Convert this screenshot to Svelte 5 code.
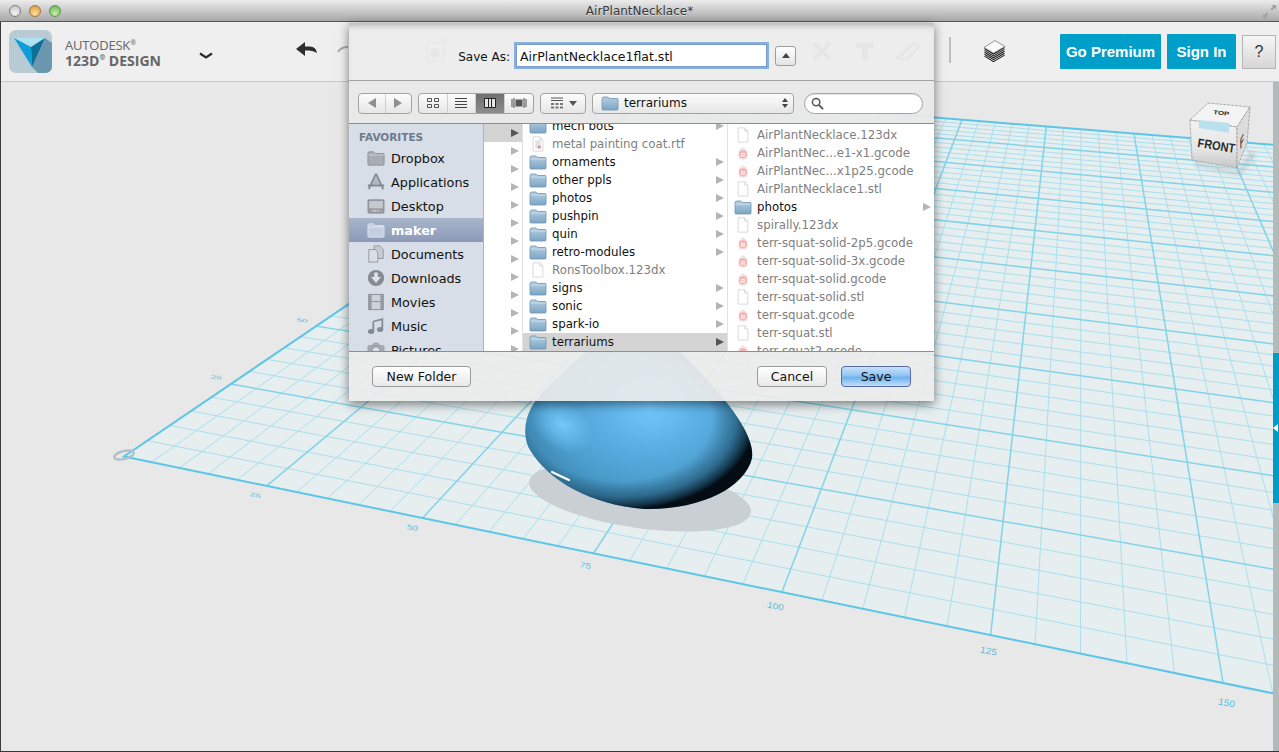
<script>
	// perspective map for the ground grid, from four measured corners
	const quad = [[124, 456.5], [1223, 683], [1134, 133.5], [657, 95]];
	const [x0, y0] = quad[0], [x1, y1] = quad[1], [x2, y2] = quad[2], [x3, y3] = quad[3];
	const sx = x0 - x1 + x2 - x3, sy = y0 - y1 + y2 - y3;
	const dx1 = x1 - x2, dx2 = x3 - x2, dy1 = y1 - y2, dy2 = y3 - y2;
	const den = dx1 * dy2 - dx2 * dy1;
	const g = (sx * dy2 - dx2 * sy) / den, h = (dx1 * sy - sx * dy1) / den;
	const a = x1 - x0 + g * x1, b = x3 - x0 + h * x3, d = y1 - y0 + g * y1, e = y3 - y0 + h * y3;

	function project(u, v) {
		const s = u / 150, t = v / 250, w = g * s + h * t + 1;
		return [(a * s + b * t + x0) / w, (d * s + e * t + y0) / w];
	}

	const uMax = 200, vMax = 250;
	const pts = (arr) => arr.map((p) => p.map((n) => n.toFixed(1)).join(',')).join(' ');
	const plane = pts([project(0, 0), project(uMax, 0), project(uMax, vMax), project(0, vMax)]);

	const minor = [], major = [];
	for (let u = 5; u <= uMax; u += 5) {
		(u % 25 ? minor : major).push([project(u, 0), project(u, vMax)]);
	}
	for (let v = 5; v < vMax; v += 5) {
		(v % 25 ? minor : major).push([project(0, v), project(uMax, v)]);
	}

	const labels = [
		{ t: '25', x: 255, y: 497, r: 11, sy: 0.55 },
		{ t: '50', x: 412, y: 530, r: 11, sy: 0.7 },
		{ t: '75', x: 585, y: 568, r: 11, sy: 0.75 },
		{ t: '100', x: 775, y: 609, r: 11, sy: 0.85 },
		{ t: '125', x: 988, y: 654, r: 11, sy: 0.9 },
		{ t: '150', x: 1226, y: 706, r: 11, sy: 0.95 },
		{ t: '25', x: 216, y: 379, r: 5, sy: 0.5 },
		{ t: '50', x: 302, y: 322, r: 5, sy: 0.45 }
	];

	const stripes = [0, 1.9, 3.8, 5.7, 7.6];

	const favorites = [
		{ name: 'Dropbox', icon: 'folder' },
		{ name: 'Applications', icon: 'apps' },
		{ name: 'Desktop', icon: 'desktop' },
		{ name: 'maker', icon: 'home', active: true },
		{ name: 'Documents', icon: 'docs' },
		{ name: 'Downloads', icon: 'down' },
		{ name: 'Movies', icon: 'film' },
		{ name: 'Music', icon: 'music' },
		{ name: 'Pictures', icon: 'camera' }
	];

	const middle = [
		{ name: 'mech bots', kind: 'dir' },
		{ name: 'metal painting coat.rtf', kind: 'rtf' },
		{ name: 'ornaments', kind: 'dir' },
		{ name: 'other ppls', kind: 'dir' },
		{ name: 'photos', kind: 'dir' },
		{ name: 'pushpin', kind: 'dir' },
		{ name: 'quin', kind: 'dir' },
		{ name: 'retro-modules', kind: 'dir' },
		{ name: 'RonsToolbox.123dx', kind: 'doc' },
		{ name: 'signs', kind: 'dir' },
		{ name: 'sonic', kind: 'dir' },
		{ name: 'spark-io', kind: 'dir' },
		{ name: 'terrariums', kind: 'dir', selected: true }
	];

	const right = [
		{ name: 'AirPlantNecklace.123dx', kind: 'doc' },
		{ name: 'AirPlantNec...e1-x1.gcode', kind: 'gcode' },
		{ name: 'AirPlantNec...x1p25.gcode', kind: 'gcode' },
		{ name: 'AirPlantNecklace1.stl', kind: 'doc' },
		{ name: 'photos', kind: 'dir' },
		{ name: 'spirally.123dx', kind: 'doc' },
		{ name: 'terr-squat-solid-2p5.gcode', kind: 'gcode' },
		{ name: 'terr-squat-solid-3x.gcode', kind: 'gcode' },
		{ name: 'terr-squat-solid.gcode', kind: 'gcode' },
		{ name: 'terr-squat-solid.stl', kind: 'doc' },
		{ name: 'terr-squat.gcode', kind: 'gcode' },
		{ name: 'terr-squat.stl', kind: 'doc' },
		{ name: 'terr-squat2.gcode', kind: 'gcode' }
	];

	const blobPath = 'M636 312 C600 340 560 372 538 398 C524 414 522 436 530 450 C548 480 590 505 645 509 C700 510 745 488 752 458 C755 440 735 412 722 397 C700 370 668 340 636 312 Z';
</script>

{#snippet fileIcon(kind)}
	{#if kind === 'dir'}
		<svg class="file-icon" viewBox="0 0 18 15">
			<path d="M1 3.5 Q1 1.5 3 1.5 H7 L8.5 3 H16 Q17 3 17 4 V13.5 Q17 14.5 16 14.5 H2 Q1 14.5 1 13.5 Z" fill="url(#folderFill)" stroke="#6f93ad" stroke-width="0.8" />
			<path d="M1.5 4.6 H16.5" stroke="#d5e5ef" stroke-width="0.8" />
		</svg>
	{:else if kind === 'gcode'}
		<svg class="file-icon" viewBox="0 0 18 18">
			<path d="M4 6.5 L9 2 L14 6.5 V15.5 Q9 17.5 4 15.5 Z" fill="#ece6e6" />
			<circle cx="9" cy="10.5" r="4.6" fill="#f8b2b2" />
			<text x="9" y="13.3" class="r-mark">R</text>
		</svg>
	{:else}
		<svg class="file-icon" viewBox="0 0 18 18">
			<path d="M3.5 1 H11 L14.5 4.5 V17 H3.5 Z" fill="#fff" stroke="#d4d4d4" />
			<path d="M11 1 V4.5 H14.5" fill="#f1f1f1" stroke="#d4d4d4" />
			{#if kind === 'rtf'}
				<rect x="6" y="5" width="6" height="9" fill="#e2e2e2" />
				<rect x="9" y="11" width="3" height="3" fill="#cf8f8f" />
			{/if}
		</svg>
	{/if}
{/snippet}

{#snippet favIcon(icon)}
	<svg class="fav-icon" viewBox="0 0 20 20">
		{#if icon === 'folder' || icon === 'home'}
			<path d="M1 5 Q1 3 3 3 H7 L9 5 H18 Q19 5 19 6 V17 Q19 18 18 18 H2 Q1 18 1 17 Z" fill={icon === 'home' ? '#c3cee0' : '#a9acb3'} stroke={icon === 'home' ? '#e6ebf3' : '#7f838b'} stroke-width="0.8" />
			<path d="M1.5 6.6 H18.5" stroke={icon === 'home' ? '#e6ebf3' : '#cfd1d6'} />
		{:else if icon === 'apps'}
			<path d="M10 1 L18 18 M10 1 L2 18 M4 13 H16 M1 14 L19 14" stroke="#858a93" stroke-width="2.2" fill="none" />
			<path d="M10 5 L6 13 H14 Z" fill="#b1b5bc" />
		{:else if icon === 'desktop'}
			<rect x="1" y="3" width="18" height="15" rx="1" fill="#9a9da5" stroke="#74777e" stroke-width="0.6" />
			<rect x="2.5" y="4.5" width="15" height="8" fill="#c6c9ce" />
			<path d="M6 15.5 H14" stroke="#e2e3e6" stroke-width="1.4" stroke-dasharray="1.5 1" />
		{:else if icon === 'docs'}
			<path d="M8 1 H14 L18 5 V15 H8 Z" fill="#c9ccd2" stroke="#7f838b" stroke-width="0.8" />
			<path d="M2 5 H9 L12 8 V19 H2 Z" fill="#dcdee2" stroke="#7f838b" stroke-width="0.8" />
		{:else if icon === 'down'}
			<circle cx="10" cy="10" r="9" fill="#858a93" />
			<path d="M8 4 H12 V9 H15.5 L10 15.5 L4.5 9 H8 Z" fill="#dfe2e7" />
		{:else if icon === 'film'}
			<rect x="2" y="1.5" width="16" height="17" fill="#cfd2d7" stroke="#858a93" />
			<rect x="2" y="1.5" width="3" height="17" fill="#858a93" />
			<rect x="15" y="1.5" width="3" height="17" fill="#858a93" />
			<path d="M5 9.5 H15" stroke="#858a93" />
			<path d="M3.5 2 V18 M16.5 2 V18" stroke="#d5d8dd" stroke-dasharray="1 1" />
		{:else if icon === 'music'}
			<path d="M7 5 L17 2.5 V14 M7 5 V16" stroke="#858a93" stroke-width="2" fill="none" />
			<ellipse cx="4.5" cy="16" rx="3.5" ry="2.8" fill="#858a93" />
			<ellipse cx="14.5" cy="14" rx="3.5" ry="2.8" fill="#858a93" />
		{:else if icon === 'camera'}
			<rect x="1" y="5" width="18" height="13" rx="2" fill="#a9acb3" stroke="#7f838b" stroke-width="0.6" />
			<circle cx="10" cy="11" r="4.5" fill="#dcdee2" stroke="#7f838b" />
			<path d="M6 5 L7.5 2.5 H12.5 L14 5" fill="#a9acb3" stroke="#7f838b" stroke-width="0.6" />
		{/if}
	</svg>
{/snippet}

<div class="window">
	<header class="titlebar">
		<div class="lights">
			<span class="light gray"></span>
			<span class="light orange"></span>
			<span class="light green"></span>
		</div>
		<span class="title">AirPlantNecklace*</span>
		<svg class="zoom-icon" viewBox="0 0 15 15">
			<path d="M14 1 H9.5 L11 2.5 L8.5 5 L10 6.5 L12.5 4 L14 5.5 Z" fill="#a2a2a2" />
			<path d="M1 14 H5.5 L4 12.5 L6.5 10 L5 8.5 L2.5 11 L1 9.5 Z" fill="#a2a2a2" />
		</svg>
	</header>

	<div class="toolbar">
		<svg class="logo" viewBox="0 0 43 43">
			<rect width="43" height="43" rx="7" fill="#b8cbd5" />
			<path d="M36 8 L43 13 V36 Q43 43 36 43 H29 L23 37 Z" fill="#6b98ae" />
			<path d="M5 8 H36 L22 17 Z" fill="#aee2f2" />
			<path d="M5 8 L22 17 L23 37 Z" fill="#0f9fd8" />
			<path d="M36 8 L22 17 L23 37 Z" fill="#0e6f96" />
		</svg>
		<div class="brand">
			<span class="brand-top">AUTODESK<sup>®</sup></span>
			<span class="brand-bottom">123D<sup>®</sup> DESIGN</span>
		</div>
		<svg class="chevron" viewBox="0 0 14 8">
			<path d="M1 1.5 L7 5.5 L13 1.5" fill="none" stroke="#2b2b2b" stroke-width="2.2" />
		</svg>
		<svg class="tools" viewBox="0 0 710 40">
			<path d="M0 15 L9 8 V12.5 H14 Q20 12.5 21 19 Q17 16.5 13 16.5 H9 V22 Z" fill="#2e2e2e" />
			<path d="M42 18 Q45 13 52 13" fill="none" stroke="#a9a9a9" stroke-width="2" />
			<g class="behind">
				<rect x="131" y="9" width="17" height="18" rx="3" fill="none" stroke="#9a9a9a" stroke-width="1.5" />
				<circle cx="139" cy="19" r="5" fill="#8a8a8a" />
				<path d="M148 3 V11 M144 7 H152" stroke="#9a9a9a" stroke-width="1.5" />
				<path d="M518 9 L534 25 M534 9 L518 25" stroke="#777" stroke-width="4" />
				<path d="M560 9 H578 V14 H572 V26 H566 V14 H560 Z" fill="#777" />
				<path d="M602 24 L616 10 Q622 8 622 14 L610 26 Z" fill="none" stroke="#8a8a8a" stroke-width="3" />
			</g>
			<path d="M654 3 V29" stroke="#8d8d8d" />
			{#each stripes as s}
				<path d="M688.5 {14.5 + s} L697.5 {20 + s} L708.5 {13.5 + s}" fill="none" stroke="#1e1e1e" stroke-width="1.1" />
			{/each}
			<path d="M688 13.5 L699 6.5 L709 12.5 L697.5 19 Z" fill="#fafafa" stroke="#555" stroke-width="0.6" />
		</svg>
		<div class="actions">
			<button class="cta premium">Go Premium</button>
			<button class="cta signin">Sign In</button>
			<button class="help">?</button>
		</div>
	</div>

	<main class="viewport">
		<svg class="scene" viewBox="0 82 1273 669">
			<defs>
				<radialGradient id="blobFill" gradientUnits="userSpaceOnUse" cx="650" cy="405" r="135" gradientTransform="translate(0 90) scale(1 .78)">
					<stop offset="0" stop-color="#72c8fc" />
					<stop offset="0.35" stop-color="#5db1e6" />
					<stop offset="0.75" stop-color="#4a9ccb" />
					<stop offset="1" stop-color="#3c83ad" />
				</radialGradient>
				<radialGradient id="blobDark" gradientUnits="userSpaceOnUse" cx="0" cy="0" r="1" gradientTransform="translate(620 420) scale(135 90)">
					<stop offset="0.68" stop-color="#1c4a66" stop-opacity="0" />
					<stop offset="0.85" stop-color="#1c4a66" stop-opacity="0.55" />
					<stop offset="0.96" stop-color="#0c2535" stop-opacity="0.92" />
					<stop offset="1" stop-color="#040d14" stop-opacity="1" />
				</radialGradient>
				<radialGradient id="blobGlow">
					<stop offset="0" stop-color="#78ccff" stop-opacity="0.9" />
					<stop offset="1" stop-color="#78ccff" stop-opacity="0" />
				</radialGradient>
				<linearGradient id="cubeFront" x1="0" y1="0" x2="0" y2="1">
					<stop offset="0" stop-color="#f2f2f2" />
					<stop offset="0.6" stop-color="#e6e6e6" />
					<stop offset="1" stop-color="#c6c6c6" />
				</linearGradient>
				<linearGradient id="folderFill" x1="0" y1="0" x2="0" y2="1">
					<stop offset="0" stop-color="#b5d0e2" />
					<stop offset="1" stop-color="#7ba5c4" />
				</linearGradient>
				<clipPath id="sceneClip">
					<rect x="0" y="82" width="1273" height="669" />
				</clipPath>
			</defs>

			<g clip-path="url(#sceneClip)">
				<polygon points={plane} fill="#e6eef0" />
				{#each minor as [p, q]}
					<line x1={p[0]} y1={p[1]} x2={q[0]} y2={q[1]} class="minor" />
				{/each}
				{#each major as [p, q]}
					<line x1={p[0]} y1={p[1]} x2={q[0]} y2={q[1]} class="major" />
				{/each}
				<polyline points={pts([project(uMax, vMax), project(0, vMax), project(0, 0), project(uMax, 0)])} class="edge" />
			</g>

			{#each labels as l}
				<text class="tick" transform="translate({l.x} {l.y}) rotate({l.r}) scale(1 {l.sy})">{l.t}</text>
			{/each}

			<ellipse cx="124" cy="455" rx="10" ry="4" transform="rotate(-14 124 455)" fill="none" stroke="#b3c0c8" stroke-width="2.5" />

			<!-- droplet and its shadow -->
			<ellipse cx="640" cy="497" rx="112" ry="31" transform="rotate(8 640 497)" fill="#c9cfd2" />
			<path d={blobPath} fill="url(#blobFill)" />
			<ellipse cx="562" cy="425" rx="34" ry="24" transform="rotate(35 562 425)" fill="url(#blobGlow)" />
			<path d={blobPath} fill="url(#blobDark)" />
			<path class="specular" d="M552 472 Q560 476 569 480" />

			<!-- view cube -->
			<polygon class="cube-shadow" points="1194,160 1237,171 1252,150 1256,155 1240,176 1196,166" />
			<g class="cube">
				<polygon points="1190,120 1208,103 1250,107 1237,127" fill="#f3f3f3" />
				<polygon points="1190,120 1237,127 1237,168 1192,160" fill="url(#cubeFront)" />
				<polygon points="1237,127 1250,107 1247,143 1237,168" fill="#dcdcdc" />
				<polygon class="strip" points="1199,120 1229,123 1229,133 1199,128" />
				<text class="cube-front" transform="translate(1197 147) rotate(9) scale(1 1.15)">FRONT</text>
				<text class="cube-top" transform="translate(1213 114) rotate(7) scale(1 .7)">TOP</text>
				<text class="cube-side" transform="translate(1240 150) skewY(-62) scale(.5 1.25)">F</text>
			</g>
		</svg>
		<aside class="side-rail">
			<div class="rail-tab"><span class="rail-arrow"></span></div>
		</aside>
	</main>

	<section class="dialog">
		<div class="saveas">
			<label class="saveas-label" for="fname">Save As:</label>
			<input id="fname" class="saveas-input" value="AirPlantNecklace1flat.stl" />
			<button class="disclose"><span class="up"></span></button>
		</div>

		<div class="browser-bar">
			<div class="seg nav">
				<span><i class="tri left"></i></span>
				<span><i class="tri right"></i></span>
			</div>
			<div class="seg views">
				<span>
					<svg viewBox="0 0 14 12" class="vi"><path d="M1.5 1.5h4v3h-4zM8.5 1.5h4v3h-4zM1.5 7.5h4v3h-4zM8.5 7.5h4v3h-4z" fill="none" stroke="#555" /></svg>
				</span>
				<span>
					<svg viewBox="0 0 14 12" class="vi"><path d="M1 1.5H13M1 4.5H13M1 7.5H13M1 10.5H13" stroke="#444" /></svg>
				</span>
				<span class="on">
					<svg viewBox="0 0 14 12" class="vi"><path d="M1.5 1.5h11v9h-11zM5.5 1.5v9M8.5 1.5v9" fill="#e6e6e6" stroke="#222" /></svg>
				</span>
				<span>
					<svg viewBox="0 0 16 12" class="vi wide"><path d="M1 2v8M3 1v10M13 1v10M15 2v8" stroke="#444" fill="none" /><rect x="4.5" y="2.5" width="7" height="7" fill="#555" /></svg>
				</span>
			</div>
			<div class="seg action">
				<svg viewBox="0 0 14 12" class="vi"><path d="M1 1H13M1 3.5H13" stroke="#555" stroke-width="1.2" /><path d="M1 6h3v2H1zM5.5 6h3v2h-3zM10 6h3v2h-3zM1 9.5h3v2H1zM5.5 9.5h3v2h-3zM10 9.5h3v2h-3z" fill="#777" /></svg>
				<i class="tri down"></i>
			</div>
			<div class="seg path">
				<svg class="file-icon" viewBox="0 0 18 15">
					<path d="M1 3.5 Q1 1.5 3 1.5 H7 L8.5 3 H16 Q17 3 17 4 V13.5 Q17 14.5 16 14.5 H2 Q1 14.5 1 13.5 Z" fill="url(#folderFill)" stroke="#6f93ad" stroke-width="0.8" />
				</svg>
				<span class="path-name">terrariums</span>
				<span class="updown"><i class="tri up-s"></i><i class="tri down-s"></i></span>
			</div>
			<div class="search">
				<svg viewBox="0 0 14 14" class="lens">
					<circle cx="5.5" cy="5.5" r="4" fill="none" stroke="#555" stroke-width="1.6" />
					<path d="M8.5 8.5 L13 13" stroke="#555" stroke-width="2" />
				</svg>
			</div>
		</div>

		<div class="panes">
			<nav class="sidebar">
				<div class="fav-head">FAVORITES</div>
				{#each favorites as f}
					<div class="fav" class:active={f.active}>
						{@render favIcon(f.icon)}
						<span>{f.name}</span>
					</div>
				{/each}
			</nav>
			<div class="col narrow">
				{#each Array(13) as _, i}
					<div class="row" class:picked={i === 0}><i class="arrow" class:dark={i === 0}></i></div>
				{/each}
			</div>
			<div class="col mid">
				{#each middle as item}
					<div class="row" class:picked={item.selected} class:off={item.kind !== 'dir'}>
						{@render fileIcon(item.kind)}
						<span class="name">{item.name}</span>
						{#if item.kind === 'dir'}<i class="arrow" class:dark={item.selected}></i>{/if}
					</div>
				{/each}
			</div>
			<div class="col last">
				{#each right as item}
					<div class="row" class:off={item.kind !== 'dir'}>
						{@render fileIcon(item.kind)}
						<span class="name">{item.name}</span>
						{#if item.kind === 'dir'}<i class="arrow"></i>{/if}
					</div>
				{/each}
			</div>
		</div>

		<footer class="dialog-foot">
			<button class="mac-btn newfolder">New Folder</button>
			<button class="mac-btn cancel">Cancel</button>
			<button class="mac-btn save">Save</button>
		</footer>
	</section>
</div>

<style>
	:global(body) {
		margin: 0;
		background: #e8e8e8;
		overflow: hidden;
	}

	.window {
		position: relative;
		width: 1279px;
		height: 752px;
		display: flex;
		flex-direction: column;
		overflow: hidden;
		background: #e8e8e8;
		border-bottom: 1px solid #2c3a3a;
		box-sizing: border-box;
		font-family: 'DejaVu Sans', sans-serif;
	}

	.window::before {
		content: '';
		position: absolute;
		left: 0;
		top: 22px;
		bottom: 0;
		width: 1px;
		background: #3a3a3a;
		z-index: 2;
	}

	.titlebar {
		height: 22px;
		flex: none;
		display: flex;
		align-items: center;
		justify-content: center;
		position: relative;
		box-sizing: border-box;
		background: linear-gradient(#ececec, #a8a8a8);
		border-bottom: 1px solid #565656;
	}

	.lights {
		position: absolute;
		left: 9px;
		top: 5px;
		display: flex;
		gap: 8px;
	}

	.light {
		width: 12px;
		height: 12px;
		border-radius: 50%;
		border: 1px solid #7d7d7d;
		box-sizing: border-box;
	}

	.light.gray {
		background: radial-gradient(circle at 50% 70%, #f4f4f4, #bdbdbd);
	}

	.light.orange {
		background: radial-gradient(circle at 50% 75%, #ffdf9e, #d9913a);
		border-color: #a5753a;
	}

	.light.green {
		background: radial-gradient(circle at 50% 75%, #c4f0a8, #5eae4a);
		border-color: #5d9350;
	}

	.title {
		font-size: 12px;
		color: #3a3a3a;
		text-shadow: 0 1px 0 #ddd;
	}

	.zoom-icon {
		position: absolute;
		right: 2px;
		top: 4px;
		width: 15px;
		height: 15px;
	}

	.toolbar {
		height: 60px;
		flex: none;
		display: flex;
		align-items: center;
		box-sizing: border-box;
		padding-left: 9px;
		background: #efefef;
		border-bottom: 1px solid #c9c9c9;
	}

	.logo {
		width: 43px;
		height: 43px;
		flex: none;
	}

	.brand {
		display: flex;
		flex-direction: column;
		margin: 2px 0 0 13px;
		width: 118px;
		color: #666;
		font-family: 'Open Sans', sans-serif;
		line-height: 15px;
	}

	.brand sup {
		font-size: 7px;
		line-height: 0;
	}

	.brand-top {
		font-size: 13px;
		letter-spacing: -0.2px;
	}

	.brand-bottom {
		font-size: 14px;
		font-weight: 700;
	}

	.chevron {
		width: 14px;
		height: 8px;
		margin: 9px 0 0 16px;
		flex: none;
	}

	.tools {
		width: 710px;
		height: 40px;
		margin: 4px 0 0 83px;
		flex: none;
	}

	.behind {
		filter: blur(0.7px);
	}

	.actions {
		display: flex;
		gap: 6px;
		margin-left: 54px;
		align-items: center;
	}

	.cta {
		height: 35px;
		border: 0;
		padding: 0;
		background: #009fca;
		color: #fff;
		border-radius: 1px;
		font: 700 15px 'Liberation Sans', Arial, sans-serif;
	}

	.premium {
		width: 101px;
	}

	.signin {
		width: 69px;
	}

	.help {
		width: 34px;
		height: 34px;
		padding: 0;
		box-sizing: border-box;
		border: 1px solid #b5b5b5;
		background: linear-gradient(#f6f6f6, #d6d6d6);
		color: #333;
		font: 16px 'Liberation Sans', Arial, sans-serif;
	}

	.viewport {
		flex: 1;
		display: flex;
		min-height: 0;
	}

	.scene {
		flex: 1;
		width: 1273px;
		height: 669px;
		display: block;
	}

	.minor {
		stroke: #aadfec;
		stroke-width: 1;
	}

	.major {
		stroke: #83d3e8;
		stroke-width: 1.5;
	}

	.edge {
		fill: none;
		stroke: #5cc6e6;
		stroke-width: 2;
	}

	.tick {
		font: 10px 'Liberation Sans', sans-serif;
		fill: #52bee0;
		text-anchor: middle;
	}

	.specular {
		fill: none;
		stroke: #fff;
		stroke-width: 2.2;
		stroke-linecap: round;
		filter: blur(0.7px);
	}

	.cube polygon {
		stroke: #9c9c9c;
		stroke-width: 0.8;
		stroke-dasharray: 3 1;
	}

	.cube .strip {
		fill: #b8e0ee;
		stroke: none;
	}

	.cube-shadow {
		fill: rgba(120, 130, 135, 0.25);
		filter: blur(2px);
	}

	.cube-front {
		font: 700 11px 'Liberation Sans', sans-serif;
		fill: #2c2c2c;
	}

	.cube-top {
		font: 700 8px 'Liberation Sans', sans-serif;
		fill: #2c2c2c;
	}

	.cube-side {
		font: 700 12px 'Liberation Sans', sans-serif;
		fill: #2c2c2c;
	}

	.r-mark {
		font: 700 7px 'Liberation Sans', sans-serif;
		fill: #fff;
		text-anchor: middle;
	}

	.side-rail {
		width: 6px;
		flex: none;
		background: #b2baba;
		padding-top: 271px;
		box-sizing: border-box;
	}

	.rail-tab {
		height: 150px;
		background: #009cc8;
		display: flex;
		align-items: center;
	}

	.rail-arrow {
		width: 0;
		height: 0;
		border: 4px solid transparent;
		border-left-width: 0;
		border-right: 5px solid #fff;
	}

	/* save sheet floats over the app */
	.dialog {
		position: absolute;
		left: 349px;
		top: 23px;
		width: 585px;
		height: 378px;
		display: flex;
		flex-direction: column;
		box-shadow: 0 3px 10px rgba(0, 0, 0, 0.5);
		font-size: 12px;
		color: #111;
	}

	.saveas {
		height: 58px;
		flex: none;
		display: flex;
		align-items: center;
		box-sizing: border-box;
		padding-top: 8px;
		background: rgba(236, 236, 236, 0.95);
		border-bottom: 1px solid #a2a2a2;
		box-shadow: inset 0 6px 6px -4px rgba(0, 0, 0, 0.28);
	}

	.saveas-label {
		width: 161px;
		text-align: right;
		font-size: 12px;
		padding-top: 2px;
	}

	.saveas-input {
		width: 251px;
		height: 23px;
		margin-left: 6px;
		box-sizing: border-box;
		padding: 2px 3px 0;
		border: 1px solid #7a9cc4;
		outline: 2px solid #86b0e0;
		background: #fff;
		font: 12.5px 'DejaVu Sans', sans-serif;
		color: #111;
	}

	.disclose {
		width: 21px;
		height: 20px;
		margin-left: 8px;
		padding: 0;
		border: 1px solid #9d9d9d;
		border-radius: 3px;
		background: linear-gradient(#fff, #e4e4e4);
		display: flex;
		align-items: center;
		justify-content: center;
	}

	.up {
		width: 0;
		height: 0;
		border: 4px solid transparent;
		border-top-width: 0;
		border-bottom: 5px solid #444;
	}

	.browser-bar {
		height: 43px;
		flex: none;
		display: flex;
		align-items: center;
		box-sizing: border-box;
		padding: 2px 11px 0 9px;
		gap: 6px;
		background: rgba(232, 232, 232, 0.97);
		border-bottom: 1px solid #8c8c8c;
	}

	.seg {
		height: 21px;
		box-sizing: border-box;
		border: 1px solid #a3a3a3;
		border-radius: 4px;
		background: linear-gradient(#fcfcfc, #e6e6e6);
		display: flex;
		align-items: center;
		overflow: hidden;
		flex: none;
	}

	.seg.nav {
		width: 54px;
	}

	.seg.nav span {
		flex: 1;
		height: 100%;
		display: flex;
		align-items: center;
		justify-content: center;
	}

	.seg.nav span + span {
		border-left: 1px solid #cfcfcf;
	}

	.seg.views {
		width: 116px;
	}

	.seg.views span {
		width: 28.5px;
		height: 100%;
		display: flex;
		align-items: center;
		justify-content: center;
		border-right: 1px solid #cfcfcf;
		box-sizing: border-box;
	}

	.seg.views span:last-child {
		border-right: 0;
	}

	.seg.views .on {
		background: linear-gradient(#6f6f6f, #8d8d8d);
	}

	.vi {
		width: 14px;
		height: 12px;
	}

	.vi.wide {
		width: 16px;
	}

	.seg.action {
		width: 46px;
		justify-content: center;
		gap: 5px;
	}

	.seg.path {
		width: 202px;
		padding-left: 8px;
		gap: 5px;
		position: relative;
	}

	.path-name {
		font-size: 12px;
	}

	.updown {
		position: absolute;
		right: 5px;
		top: 4px;
		display: flex;
		flex-direction: column;
		gap: 2px;
	}

	.tri {
		display: block;
		width: 0;
		height: 0;
		border: 5px solid transparent;
	}

	.tri.left {
		border-left-width: 0;
		border-right: 8px solid #8f8f8f;
	}

	.tri.right {
		border-right-width: 0;
		border-left: 8px solid #8f8f8f;
	}

	.tri.down {
		border-width: 5px 4px 0;
		border-top-color: #555;
	}

	.tri.up-s {
		border-width: 0 3px 4px;
		border-bottom-color: #444;
	}

	.tri.down-s {
		border-width: 4px 3px 0;
		border-top-color: #444;
	}

	.search {
		width: 120px;
		height: 21px;
		margin-left: 4px;
		box-sizing: border-box;
		border: 1px solid #a3a3a3;
		border-radius: 11px;
		background: #fff;
		display: flex;
		align-items: center;
		padding-left: 6px;
		box-shadow: inset 0 1px 1px rgba(0, 0, 0, 0.12);
	}

	.lens {
		width: 13px;
		height: 13px;
	}

	.panes {
		height: 227px;
		flex: none;
		display: flex;
		background: #fff;
		overflow: hidden;
	}

	.sidebar {
		width: 135px;
		flex: none;
		background: #d7dee7;
		border-right: 1px solid #b3b3b3;
		box-sizing: border-box;
		overflow: hidden;
	}

	.fav-head {
		height: 22px;
		padding: 7px 0 0 10px;
		box-sizing: border-box;
		font-size: 10.5px;
		font-weight: 700;
		color: #6d7a8c;
	}

	.fav {
		height: 24px;
		display: flex;
		align-items: center;
		gap: 6px;
		padding-left: 18px;
		font-size: 12.8px;
	}

	.fav.active {
		background: linear-gradient(#a8b5cb, #8c9ab8);
		color: #fff;
		font-weight: 700;
	}

	.fav-icon {
		width: 18px;
		height: 18px;
		flex: none;
	}

	.col {
		flex: none;
		box-sizing: border-box;
		overflow: hidden;
	}

	.col.narrow {
		width: 39px;
		border-right: 1px solid #e2e2e2;
	}

	.col.narrow .row {
		justify-content: flex-end;
		padding-right: 3px;
	}

	.col.mid {
		width: 205px;
		border-right: 1px solid #e2e2e2;
	}

	.col.mid .row:first-child {
		margin-top: -7px;
	}

	.col.last {
		flex: 1;
		padding-top: 2px;
	}

	.row {
		height: 18px;
		display: flex;
		align-items: center;
		box-sizing: border-box;
		padding: 0 3px 0 6px;
		white-space: nowrap;
		font-size: 11.8px;
		color: #111;
	}

	.row.off {
		color: #808080;
	}

	.row.picked {
		background: #d4d4d4;
	}

	.col.last .row {
		padding-left: 6px;
	}

	.name {
		margin-left: 5px;
		flex: 1;
	}

	.file-icon {
		width: 18px;
		height: 16px;
		flex: none;
	}

	.arrow {
		display: block;
		width: 0;
		height: 0;
		border-style: solid;
		border-width: 4.5px 0 4.5px 8px;
		border-color: transparent transparent transparent #b5b5b5;
	}

	.arrow.dark {
		border-left-color: #555;
	}

	.dialog-foot {
		height: 50px;
		flex: none;
		display: flex;
		align-items: center;
		box-sizing: border-box;
		padding: 0 23px 1px;
		border-top: 1px solid #8e8e8e;
		background: rgba(236, 236, 236, 0.92);
	}

	.mac-btn {
		height: 21px;
		padding: 0;
		border: 1px solid #9a9a9a;
		border-radius: 4px;
		background: linear-gradient(#fff, #e9e9e9);
		font: 12.5px 'DejaVu Sans', sans-serif;
		color: #111;
	}

	.newfolder {
		width: 99px;
	}

	.cancel {
		width: 70px;
		margin-left: auto;
	}

	.save {
		width: 70px;
		margin-left: 14px;
		border-color: #5a6aa8;
		background: linear-gradient(#c9e2fa 0%, #8fc4f3 45%, #6fb1ee 55%, #bfe1fb 100%);
	}
</style>
